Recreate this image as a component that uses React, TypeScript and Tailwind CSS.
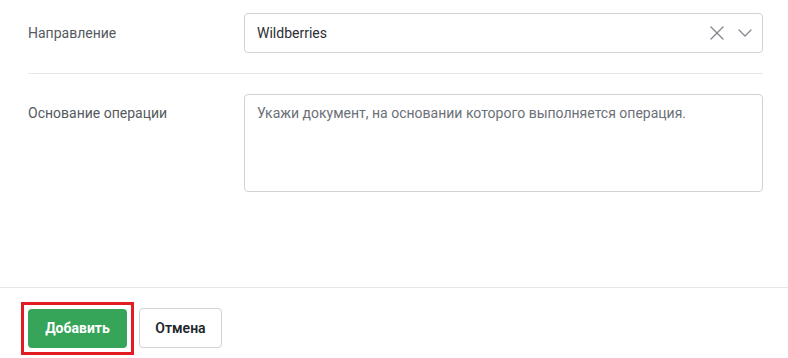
import { X, ChevronDown } from 'lucide-react';

export default function App() {
  return (
    <div className="w-[788px] h-[358px] bg-white flex flex-col font-['Roboto',sans-serif] text-[14px]">
      <div className="pl-[28px] pr-[25px] pt-[13px]">
        <div className="flex items-center">
          <div className="w-[216px] shrink-0 text-[#555a60]">Направление</div>
          <div className="flex-1 h-[40px] border border-[#cfd2d6] rounded-[4px] flex items-center pl-[12px] pr-[5px]">
            <span className="flex-1 text-[#2b2f33]">Wildberries</span>
            <X size={24} strokeWidth={1.3} className="text-[#80858c]" />
            <ChevronDown size={24} strokeWidth={1.2} className="text-[#80858c] ml-[4px]" />
          </div>
        </div>
        <div className="mt-[20px] border-t border-[#e6e7e9]" />
        <div className="mt-[20px] flex items-start">
          <div className="w-[216px] shrink-0 pt-[9px] text-[#555a60]">Основание операции</div>
          <textarea
            className="flex-1 h-[98px] resize-none border border-[#cfd2d6] rounded-[4px] px-[12px] pt-[8px] outline-none leading-[20px] text-[#2b2f33] placeholder:text-[#6b7078]"
            placeholder="Укажи документ, на основании которого выполняется операция."
          />
        </div>
      </div>
      <div className="mt-auto h-[71px] border-t border-[#e6e7e9] pl-[21px] pt-[14px] flex items-start gap-[5px]">
        <div className="border-[3px] border-[#e31b23] p-[4px]">
          <button className="block w-[99px] h-[39px] rounded-[4px] bg-[#36a55a] text-white font-bold text-[14px]">
            Добавить
          </button>
        </div>
        <button className="mt-[6px] w-[83px] h-[40px] rounded-[4px] border border-[#cfd2d6] bg-white text-[#22262a] font-semibold text-[14px]">
          Отмена
        </button>
      </div>
    </div>
  );
}
